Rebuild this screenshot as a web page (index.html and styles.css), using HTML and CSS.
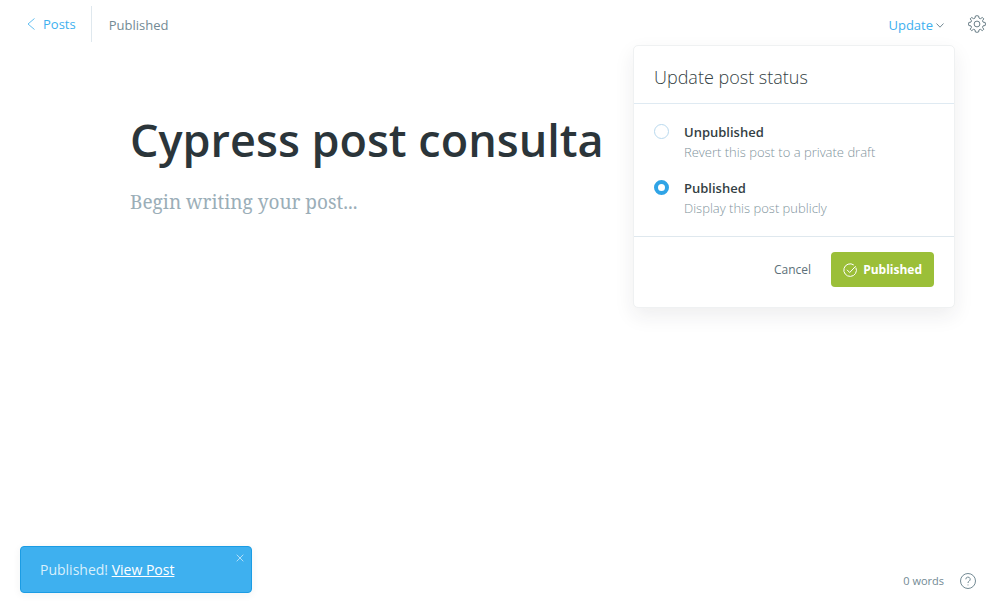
FILE: index.html
```html
<!DOCTYPE html>
<html lang="en">
<head>
<meta charset="utf-8">
<meta name="viewport" content="width=device-width, initial-scale=1">
<title>Cypress post consulta</title>
<link rel="stylesheet" href="styles.css">
</head>
<body>
<div class="app">
  <header class="topbar">
    <nav class="crumbs">
      <a class="back" href="#posts">
        <svg class="back-icon" viewBox="0 0 8 12" aria-hidden="true"><path d="M7.500 0.500 1 6l6.500 5.500"/></svg>
        Posts
      </a>
      <span class="state">Published</span>
    </nav>
    <div class="actions">
      <div class="update">
        <button class="update-trigger" type="button" aria-expanded="true">
          Update
          <svg class="caret" viewBox="0 0 8 5" aria-hidden="true"><path d="M0.500 0.500 4 4.200l3.500-3.700"/></svg>
        </button>
        <form class="menu">
          <h2 class="menu-title">Update post status</h2>
          <div class="options">
            <div class="option">
              <input class="radio" type="radio" name="status" id="unpublished">
              <label class="option-text" for="unpublished">
                <span class="option-name">Unpublished</span>
                <span class="option-hint">Revert this post to a private draft</span>
              </label>
            </div>
            <div class="option">
              <input class="radio" type="radio" name="status" id="published" checked>
              <label class="option-text" for="published">
                <span class="option-name">Published</span>
                <span class="option-hint">Display this post publicly</span>
              </label>
            </div>
          </div>
          <div class="menu-footer">
            <button class="cancel" type="button">Cancel</button>
            <button class="confirm" type="button">
              <svg class="check" viewBox="0 0 14 14" aria-hidden="true"><path d="M12.900 4.600A6.300 6.300 0 1 1 10.800 2"/><path d="m4 6.800 2.700 2.700 6-6.300"/></svg>
              Published
            </button>
          </div>
        </form>
      </div>
      <button class="icon-button" type="button" aria-label="Settings">
        <svg class="gear" viewBox="0 0 18 18" aria-hidden="true"><path d="M7.400 1Q9 .4 10.600 1L11 3.100 12.400 3.700 14.300 2.500Q15.200 3 15.800 3.900L14.500 5.700 15 7.100 17.200 7.500Q17.700 9 17.200 10.500L15 10.900 14.500 12.300 15.800 14.200Q15.200 15 14.300 15.600L12.400 14.300 11 14.900 10.600 17Q9 17.600 7.400 17L7 14.900 5.600 14.300 3.700 15.600Q2.800 15 2.200 14.200L3.500 12.300 3 10.900.8 10.500Q.3 9 .8 7.500L3 7.100 3.500 5.700 2.200 3.900Q2.800 3 3.700 2.500L5.600 3.700 7 3.100z"/><circle cx="9" cy="9" r="2.900"/></svg>
      </button>
    </div>
  </header>
  <main class="editor">
    <input class="post-title" type="text" aria-label="Post title" value="Cypress post consulta">
    <textarea class="post-body" aria-label="Post content" placeholder="Begin writing your post..."></textarea>
  </main>
  <footer class="bottom">
    <div class="toast" role="status">
      <span class="toast-text">Published! <a class="toast-link" href="#view">View Post</a></span>
      <button class="toast-close" type="button" aria-label="Close">
        <svg class="cross" viewBox="0 0 8 8" aria-hidden="true"><path d="m.7.7 6.600 6.600M7.300.7.700 7.300"/></svg>
      </button>
    </div>
    <div class="info">
      <span class="words">0 words</span>
      <a class="help" href="#help" aria-label="Help">
        <svg class="help-icon" viewBox="0 0 16 16" aria-hidden="true"><circle cx="8" cy="8" r="7.500"/><path d="M5.800 6.300a2.200 2.200 0 1 1 3.300 1.900C8.300 8.600 8 9 8 10M8 11.500v.9"/></svg>
      </a>
    </div>
  </footer>
</div>
</body>
</html>
```

FILE: styles.css
```css
* {
  box-sizing: border-box;
}

body {
  margin: 0;
  background: #fff;
  color: #738a94;
  font-family: "Segoe UI", "Open Sans", "Noto Sans", sans-serif;
  font-size: 13px;
  line-height: 20px;
}

button,
input,
textarea {
  margin: 0;
  padding: 0;
  border: 0;
  background: none;
  color: inherit;
  font: inherit;
}

button {
  cursor: pointer;
}

svg {
  display: block;
  flex: none;
  fill: none;
  stroke: currentColor;
}

.app {
  display: flex;
  flex-direction: column;
  min-height: 100vh;
}

.topbar {
  display: flex;
  justify-content: space-between;
  align-items: center;
  height: 48px;
  padding: 0 14px 0 27px;
}

.crumbs,
.actions {
  display: flex;
  align-items: center;
}

.back {
  display: flex;
  align-items: center;
  gap: 8px;
  height: 36px;
  padding-right: 15px;
  border-right: 1px solid #dfe8ee;
  color: #3eb0ef;
  text-decoration: none;
}

.back-icon {
  width: 8px;
  height: 12px;
  opacity: 0.8;
}

.state {
  padding: 2px 0 0 17px;
}

.actions {
  gap: 24px;
}

.update {
  position: relative;
}

.update-trigger {
  display: flex;
  align-items: center;
  gap: 3px;
  padding-top: 2px;
  color: #3eb0ef;
}

.caret {
  width: 8px;
  height: 5px;
  color: #738a94;
}

.gear {
  width: 18px;
  height: 18px;
  color: #6b7f88;
}

.menu {
  position: absolute;
  top: 32px;
  right: -11px;
  z-index: 2;
  width: 322px;
  border: 1px solid #eff1f2;
  border-radius: 5px;
  background: #fff;
  box-shadow: 0 8px 20px rgba(39, 44, 49, 0.08);
}

.menu-title {
  margin: 0;
  padding: 19px 20px 14px;
  border-bottom: 1px solid #dfeaf2;
  color: #343f44;
  font-size: 18px;
  font-weight: 300;
  line-height: 24px;
}

.options {
  display: flex;
  flex-direction: column;
  gap: 16px;
  padding: 18px 20px;
}

.option {
  display: flex;
  gap: 15px;
}

.radio {
  flex: none;
  width: 15px;
  height: 15px;
  margin-top: 2px;
  border: 1px solid #b9d9ee;
  border-radius: 50%;
  appearance: none;
}

.radio:checked {
  border: 4px solid #30a4e6;
}

.option-name,
.option-hint {
  display: block;
}

.option-name {
  color: #343f44;
  font-weight: 600;
}

.option-hint {
  color: #7f949d;
  font-weight: 300;
}

.menu-footer {
  display: flex;
  justify-content: flex-end;
  align-items: center;
  gap: 20px;
  padding: 15px 20px 20px;
  border-top: 1px solid #dfe8ee;
}

.cancel {
  font-size: 12px;
  color: #5c7079;
}

.confirm {
  display: flex;
  align-items: center;
  gap: 6px;
  height: 35px;
  padding: 0 12px;
  border-radius: 4px;
  background: #9bbf38;
  color: #fff;
  font-size: 12px;
  font-weight: 700;
}

.check {
  width: 14px;
  height: 14px;
}

.editor {
  display: flex;
  flex: 1;
  flex-direction: column;
  width: 100%;
  max-width: 780px;
  margin: 0 auto;
  padding: 60px 20px 20px;
}

.post-title {
  width: 100%;
  height: 64px;
  color: #2b353a;
  font-size: 45px;
  font-weight: 600;
  line-height: 64px;
}

.post-body {
  flex: 1;
  width: 100%;
  margin-top: 16px;
  font-family: Georgia, "Noto Serif", "Liberation Serif", serif;
  font-size: 19px;
  line-height: 28px;
  resize: none;
}

.post-body::placeholder {
  color: #9baeb8;
  opacity: 1;
}

.bottom {
  display: flex;
  justify-content: space-between;
  align-items: flex-end;
  padding: 0 24px 20px 20px;
}

.toast {
  display: flex;
  justify-content: space-between;
  width: 232px;
  padding: 0 7px 0 19px;
  border: 1px solid #1b9ce4;
  border-radius: 4px;
  background: #3eb0ef;
  box-shadow: 0 2px 8px rgba(39, 44, 49, 0.06);
  color: #d8effc;
}

.toast-text {
  padding: 13px 0 12px;
  font-size: 14px;
}

.toast-link {
  color: #fff;
}

.toast-close {
  align-self: flex-start;
  margin-top: 7px;
  color: #b2dff8;
}

.cross {
  width: 8px;
  height: 8px;
}

.info {
  display: flex;
  align-items: center;
  gap: 16px;
  padding-bottom: 2px;
}

.words {
  font-size: 11px;
}

.help {
  color: #738a94;
}

.help-icon {
  width: 16px;
  height: 16px;
}
```
